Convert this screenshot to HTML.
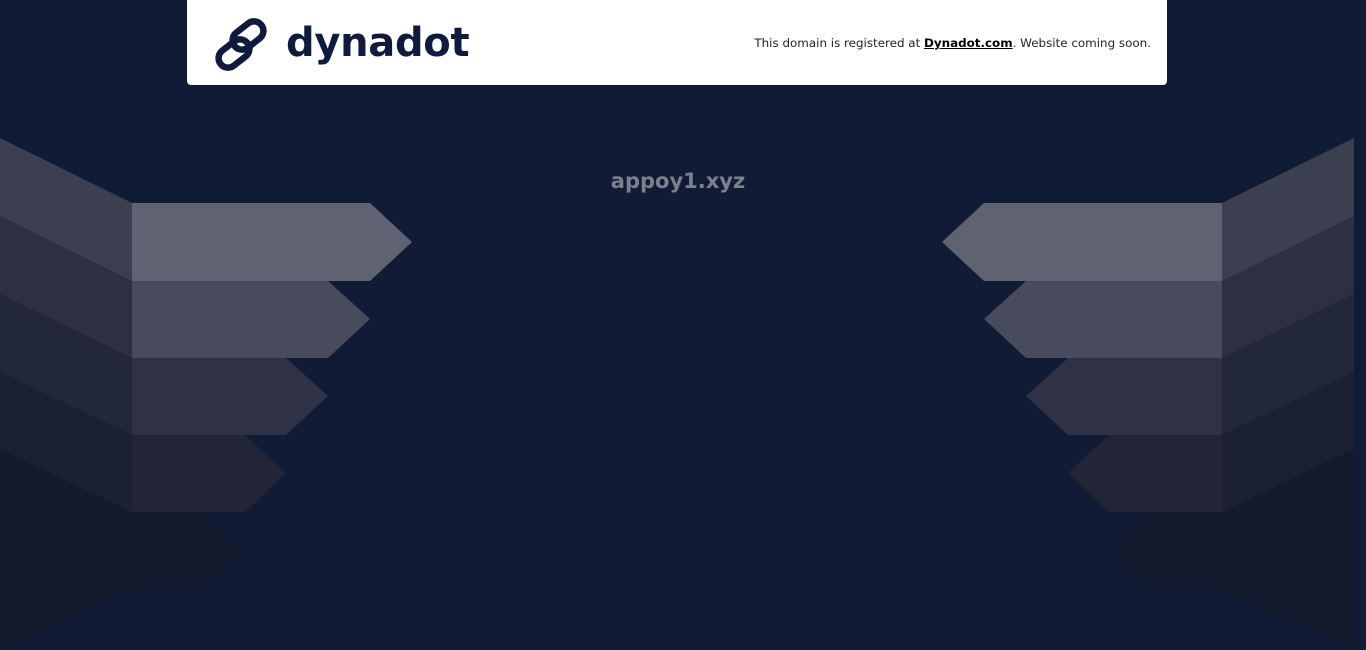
<!DOCTYPE html>
<html><head><meta charset="utf-8"><style>
html,body{margin:0;padding:0;width:1366px;height:650px;overflow:hidden;background:#101c36;font-family:"Liberation Sans","DejaVu Sans",sans-serif}
.hdr{position:absolute;left:187px;top:0;width:980px;height:85px;background:#fff;border-radius:0 0 4px 4px}
.logo{position:absolute;left:99px;top:20px;font-size:40px;font-weight:bold;color:#0f1a3d;letter-spacing:-0.3px;font-family:"DejaVu Sans","Liberation Sans",sans-serif}
.msg{position:absolute;right:16px;top:36px;font-size:11.9px;color:#222;font-family:"DejaVu Sans",sans-serif}
.msg b{text-decoration:underline;color:#000}
.title{position:absolute;left:0;width:1356px;top:169px;text-align:center;font-size:21px;font-weight:bold;color:#7d808b;font-family:"DejaVu Sans",sans-serif}
svg.bg{position:absolute;left:0;top:0}
</style></head><body>
<svg class="bg" width="1366" height="650">
<g id="L">
<polygon points="0,449 132,512 132,590 0,650" fill="#141a2d"/>
<polygon points="0,372 132,435 132,512 0,449" fill="#1b2032"/>
<polygon points="0,294 132,358 132,435 0,372" fill="#22273a"/>
<polygon points="0,216 132,281 132,358 0,294" fill="#2c3042"/>
<polygon points="0,138 132,203 132,281 0,216" fill="#3c3f50"/>
<polygon points="132,512 203,512 244,551 203,590 132,590" fill="#141a2e"/>
<polygon points="132,435 245,435 286,473 245,512 132,512" fill="#212536"/>
<polygon points="132,358 286,358 328,396 286,435 132,435" fill="#2e3244"/>
<polygon points="132,281 328,281 370,319 328,358 132,358" fill="#484b5b"/>
<polygon points="132,203 370,203 412,242 370,281 132,281" fill="#5f6271"/>
</g>
<use href="#L" transform="translate(1354,0) scale(-1,1)"/>
</svg>
<div class="hdr">
<svg style="position:absolute;left:24px;top:12px" width="62" height="62" viewBox="0 0 62 62">
<g fill="none" stroke="#0f1a3d" stroke-width="6.5">
<rect x="20" y="14" width="34" height="19" rx="9.5" transform="rotate(-38 37 23.5)"/>
<rect x="6" y="32" width="34" height="19" rx="9.5" transform="rotate(-38 23 41.5)"/>
</g></svg>
<div class="logo">dynadot</div>
<div class="msg">This domain is registered at <b>Dynadot.com</b>. Website coming soon.</div>
</div>
<div class="title">appoy1.xyz</div>
</body></html>
